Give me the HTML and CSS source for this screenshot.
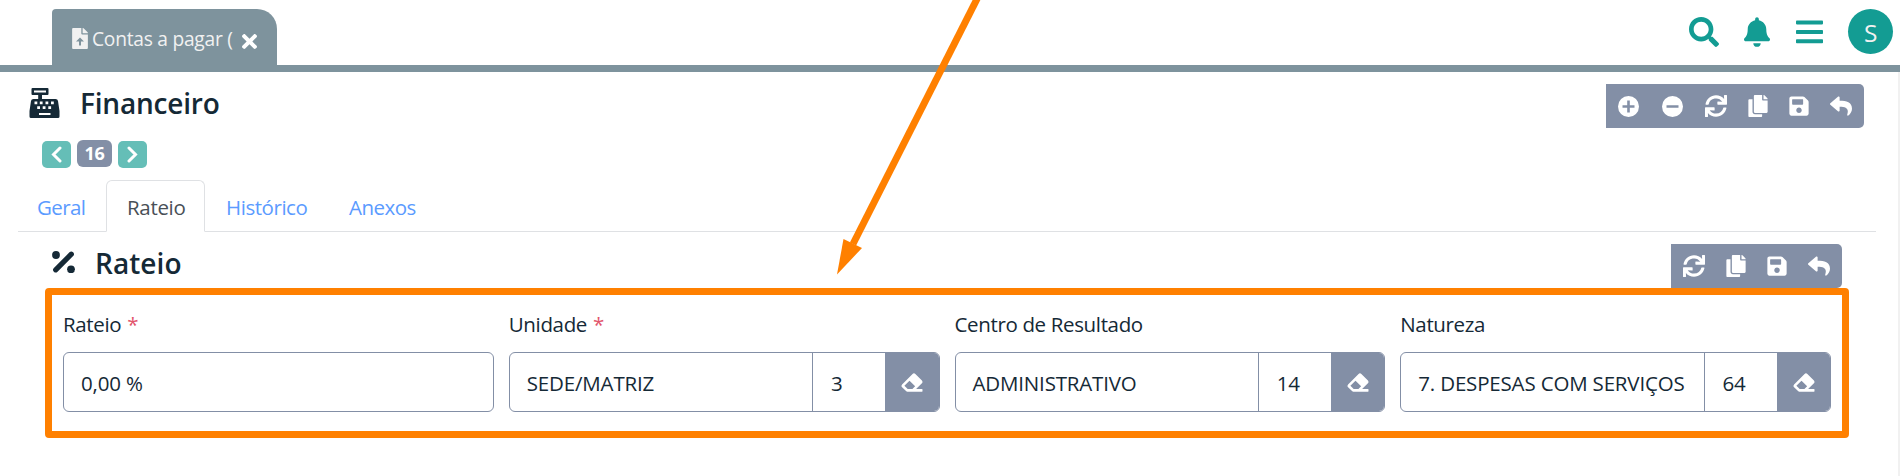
FILE: index.html
```html
<!DOCTYPE html>
<html lang="pt-BR">
<head>
<meta charset="utf-8">
<title>Financeiro</title>
<link rel="stylesheet" href="styles.css">
</head>
<body>
<svg class="sprite" aria-hidden="true">
  <symbol id="sync" viewBox="0 0 512 512"><path d="M440.65 12.57l4 82.77A247.16 247.16 0 0 0 255.83 8C134.73 8 33.91 94.92 12.29 209.82A12 12 0 0 0 24.09 224h49.05a12 12 0 0 0 11.67-9.26 175.91 175.91 0 0 1 317-56.94l-101.46-4.86a12 12 0 0 0-12.57 12v47.41a12 12 0 0 0 12 12H500a12 12 0 0 0 12-12V12a12 12 0 0 0-12-12h-47.37a12 12 0 0 0-11.98 12.57zM255.83 432a175.61 175.61 0 0 1-146-77.8l101.8 4.87a12 12 0 0 0 12.57-12v-47.4a12 12 0 0 0-12-12H12a12 12 0 0 0-12 12V500a12 12 0 0 0 12 12h47.35a12 12 0 0 0 12-12.6l-4.15-82.57A247.17 247.17 0 0 0 255.83 504c121.11 0 221.93-86.92 243.55-201.82a12 12 0 0 0-11.8-14.18h-49.05a12 12 0 0 0-11.67 9.26A175.86 175.86 0 0 1 255.83 432z"/></symbol>
  <symbol id="copy" viewBox="0 0 448 512"><path d="M320 448v40c0 13.255-10.745 24-24 24H24c-13.255 0-24-10.745-24-24V120c0-13.255 10.745-24 24-24h72v296c0 30.879 25.121 56 56 56h168zm0-344V0H152c-13.255 0-24 10.745-24 24v368c0 13.255 10.745 24 24 24h272c13.255 0 24-10.745 24-24V128H344c-13.2 0-24-10.8-24-24zm120.971-31.029L375.029 7.029A24 24 0 0 0 358.059 0H352v96h96v-6.059a24 24 0 0 0-7.029-16.97z"/></symbol>
  <symbol id="save" viewBox="0 0 448 512"><path d="M433.941 129.941l-83.882-83.882A48 48 0 0 0 316.118 32H48C21.49 32 0 53.49 0 80v352c0 26.51 21.49 48 48 48h352c26.51 0 48-21.49 48-48V163.882a48 48 0 0 0-14.059-33.941zM224 416c-35.346 0-64-28.654-64-64 0-35.346 28.654-64 64-64s64 28.654 64 64c0 35.346-28.654 64-64 64zm96-304.52V212c0 6.627-5.373 12-12 12H76c-6.627 0-12-5.373-12-12V108c0-6.627 5.373-12 12-12h228.52c3.183 0 6.235 1.264 8.485 3.515l3.48 3.48A11.996 11.996 0 0 1 320 111.48z"/></symbol>
  <symbol id="reply" viewBox="0 0 512 512"><path d="M8.309 189.836L184.313 37.851C199.719 24.546 224 35.347 224 56.015v80.053c160.629 1.839 288 34.032 288 186.258 0 61.441-39.581 122.309-83.333 154.132-13.653 9.931-33.111-2.533-28.077-18.631 45.344-145.012-21.507-183.51-176.59-185.742V360c0 20.7-24.3 31.453-39.687 18.164l-176.004-152c-11.071-9.562-11.086-26.753 0-36.328z"/></symbol>
  <symbol id="eraser" viewBox="0 0 512 512"><path d="M497.941 273.941c18.745-18.745 18.745-49.137 0-67.882l-160-160c-18.745-18.745-49.136-18.746-67.883 0l-256 256c-18.745 18.745-18.745 49.137 0 67.882l96 96A48.004 48.004 0 0 0 144 480h356c6.627 0 12-5.373 12-12v-40c0-6.627-5.373-12-12-12H355.883l142.058-142.059zm-302.627-62.627l137.373 137.373L265.373 416H150.628l-80-80 124.686-124.686z"/></symbol>
</svg>

<header class="topbar">
  <div class="doc-tab">
    <svg class="doc-icon" viewBox="0 0 384 512"><path fill-rule="evenodd" d="M224 136V0H24A24 24 0 0 0 0 24v464a24 24 0 0 0 24 24h336a24 24 0 0 0 24-24V160H248a24 24 0 0 1-24-24zM377 105L279 7a24 24 0 0 0-17-7h-6v128h128v-6a24 24 0 0 0-7-17zM168 424V328H95L192 232l97 96h-73v96z"/></svg>
    <span class="doc-name">Contas a pagar (</span>
    <svg class="doc-close" viewBox="0 80 352 352"><path d="M242.72 256l100.07-100.07c12.28-12.28 12.28-32.19 0-44.48l-22.24-22.24c-12.28-12.28-32.19-12.28-44.48 0L176 189.28 75.93 89.21c-12.28-12.28-32.19-12.28-44.48 0L9.21 111.45c-12.28 12.28-12.28 32.19 0 44.48L109.28 256 9.21 356.07c-12.28 12.28-12.28 32.19 0 44.48l22.24 22.24c12.28 12.28 32.2 12.28 44.48 0L176 322.72l100.07 100.07c12.28 12.28 32.2 12.28 44.48 0l22.24-22.24c12.28-12.28 12.28-32.19 0-44.48L242.72 256z"/></svg>
  </div>
  <nav class="top-actions">
    <svg class="ic-search" viewBox="0 0 512 512"><path d="M505 442.7L405.3 343c-4.5-4.5-10.6-7-17-7H372c27.6-35.3 44-79.7 44-128C416 93.1 322.9 0 208 0S0 93.1 0 208s93.1 208 208 208c48.3 0 92.7-16.4 128-44v16.3c0 6.4 2.5 12.5 7 17l99.7 99.7c9.4 9.4 24.6 9.4 33.9 0l28.3-28.3c9.4-9.4 9.4-24.6.1-34zM208 336c-70.7 0-128-57.2-128-128 0-70.7 57.2-128 128-128 70.7 0 128 57.2 128 128 0 70.7-57.2 128-128 128z"/></svg>
    <svg class="ic-bell" viewBox="0 0 448 512"><path d="M224 512c35.32 0 63.97-28.65 63.97-64H160.03c0 35.35 28.65 64 63.97 64zm215.39-149.71c-19.32-20.76-55.47-51.99-55.47-154.29 0-77.7-54.48-139.9-127.94-155.16V32c0-17.67-14.32-32-31.98-32s-31.98 14.33-31.98 32v20.84C118.56 68.1 64.08 130.3 64.08 208c0 102.3-36.15 133.53-55.47 154.29-6 6.45-8.66 14.16-8.61 21.71.11 16.4 12.98 32 32.1 32h383.8c19.12 0 32-15.6 32.1-32 .05-7.55-2.61-15.27-8.61-21.71z"/></svg>
    <svg class="ic-bars" viewBox="0 0 27 24"><rect y="0.4" width="27" height="4" rx=".8"/><rect y="10" width="27" height="4" rx=".8"/><rect y="19.3" width="27" height="4" rx=".8"/></svg>
    <span class="avatar">S</span>
  </nav>
</header>

<main class="page">
  <section class="page-head">
    <svg class="ic-register" viewBox="0 0 30 30"><path fill-rule="evenodd" d="M3 0H18Q19 0 19 1V6Q19 7 18 7H12.500V11H26Q28.200 11 28.500 13L30 23V28.500Q30 30 28.500 30H1.500Q0 30 0 28.500V23L1.500 13Q1.800 11 4 11H8.700V7H3Q2 7 2 6V1Q2 0 3 0ZM4.500 2.500V4.500H16.500V2.500ZM5 13.500V16.200H7.800V13.500ZM10.300 13.500V16.200H13.100V13.500ZM16 13.500V16.200H18.800V13.500ZM21.500 13.500V16.200H24.300V13.500ZM7.700 18.300V21H10.500V18.300ZM13.200 18.300V21H16V18.300ZM18.800 18.300V21H21.600V18.300ZM9.500 25V27H21V25Z"/></svg>
    <h1 class="title">Financeiro</h1>
    <div class="toolbar main-tools">
      <svg class="round" viewBox="0 0 21 21"><path fill-rule="evenodd" d="M10.500 0A10.500 10.500 0 1 0 10.500 21A10.500 10.500 0 1 0 10.500 0ZM9.200 4.500H11.800V9.200H16.500V11.800H11.800V16.500H9.200V11.800H4.500V9.200H9.200Z"/></svg>
      <svg class="round" viewBox="0 0 21 21"><path fill-rule="evenodd" d="M10.500 0A10.500 10.500 0 1 0 10.500 21A10.500 10.500 0 1 0 10.500 0ZM4.500 9.200H16.500V11.800H4.500Z"/></svg>
      <svg class="wide"><use href="#sync"/></svg>
      <svg class="narrow"><use href="#copy"/></svg>
      <svg class="narrow"><use href="#save"/></svg>
      <svg class="wide"><use href="#reply"/></svg>
    </div>
  </section>

  <div class="pager">
    <button class="step"><svg viewBox="0 0 11 17"><path d="M9 2L2.500 8.500L9 15"/></svg></button>
    <span class="count">16</span>
    <button class="step"><svg viewBox="0 0 11 17"><path d="M2 2L8.500 8.500L2 15"/></svg></button>
  </div>

  <nav class="tabs">
    <a class="tab geral">Geral</a>
    <a class="tab active">Rateio</a>
    <a class="tab historico">Histórico</a>
    <a class="tab anexos">Anexos</a>
  </nav>

  <section class="sub-head">
    <svg class="ic-percent" viewBox="0 0 23 22"><circle cx="4" cy="4" r="3.900"/><circle cx="19" cy="18.300" r="3.900"/><path d="M19.300 3.200L3.700 18.800"/></svg>
    <h2 class="title">Rateio</h2>
    <div class="toolbar">
      <svg class="wide"><use href="#sync"/></svg>
      <svg class="narrow"><use href="#copy"/></svg>
      <svg class="narrow"><use href="#save"/></svg>
      <svg class="wide"><use href="#reply"/></svg>
    </div>
  </section>

  <section class="fields">
    <div class="field">
      <div class="label"><span>Rateio</span> <span class="req">*</span></div>
      <div class="control"><span class="value">0,00 %</span></div>
    </div>
    <div class="field">
      <div class="label"><span>Unidade</span> <span class="req">*</span></div>
      <div class="control"><span class="value">SEDE/MATRIZ</span><span class="code">3</span><button class="erase"><svg><use href="#eraser"/></svg></button></div>
    </div>
    <div class="field">
      <div class="label"><span>Centro de Resultado</span></div>
      <div class="control"><span class="value">ADMINISTRATIVO</span><span class="code">14</span><button class="erase"><svg><use href="#eraser"/></svg></button></div>
    </div>
    <div class="field">
      <div class="label"><span>Natureza</span></div>
      <div class="control"><span class="value">7. DESPESAS COM SERVIÇOS</span><span class="code">64</span><button class="erase"><svg><use href="#eraser"/></svg></button></div>
    </div>
  </section>
</main>

<svg class="arrow" viewBox="0 0 150 276"><path d="M141.500 -4L16 244" stroke-width="7"/><path class="head" d="M0 274.500L6.500 239L25 248Z"/></svg>
</body>
</html>
```
FILE: styles.css
```css
* { box-sizing: border-box; }

body {
  margin: 0;
  height: 476px;
  overflow: hidden;
  background: #fff;
  color: #152936;
  font-family: "Open Sans", "Noto Sans", sans-serif;
  font-size: 20.500px;
  letter-spacing: -0.320px;
  display: flex;
  flex-direction: column;
}

svg { display: block; flex: none; fill: currentColor; }
.sprite { display: none; }
button { border: 0; padding: 0; display: flex; align-items: center; justify-content: center; color: #fff; }

.topbar {
  height: 72px;
  flex: none;
  border-bottom: 7px solid #7e939d;
  padding: 0 7px 0 52px;
  display: flex;
  justify-content: space-between;
}

.doc-tab {
  width: 225px;
  height: 56px;
  margin-top: 9px;
  padding: 4px 20px 0;
  display: flex;
  align-items: center;
  background: #7e939d;
  color: #f1f1f1;
  border-radius: 4px 20px 0 0;
}
.doc-icon { width: 16px; height: 21px; margin: 0 4px 2px 0; }
.doc-name { width: 150px; font-size: 19.200px; letter-spacing: -0.250px; white-space: nowrap; padding-bottom: 2px; }
.doc-close { width: 15px; height: 15px; margin-top: 5px; color: #fff; }

.top-actions { display: flex; align-items: center; color: #139c93; height: 63px; }
.ic-search { width: 30px; height: 30px; margin-right: 25px; }
.ic-bell { width: 26px; height: 30px; margin-right: 26px; }
.ic-bars { width: 27px; height: 24px; margin-right: 25px; }
.avatar {
  width: 45px;
  height: 45px;
  border-radius: 50%;
  background: #139c93;
  color: #f1f1f1;
  font-size: 24.500px;
  line-height: 47px;
  text-align: center;
}

.page { flex: 1; border-right: 2px solid #f1f1f1; padding-top: 12px; }

.page-head { display: flex; height: 44px; padding: 0 34px 0 29px; }
.title { margin: 0; font-size: 28px; font-weight: 600; line-height: 38px; flex: 1; letter-spacing: -0.200px; }
.ic-register { width: 31px; height: 30px; margin: 4px 20px 0 0; }

.toolbar {
  height: 44px;
  padding: 0 12px;
  display: flex;
  align-items: center;
  gap: 21px;
  background: #838fa6;
  color: #fff;
  border-radius: 0 5px 5px 0;
}
.main-tools { width: 258px; }
.round { width: 21px; height: 21px; margin-right: 1.500px; }
.wide { width: 22px; height: 22px; }
.narrow { width: 20px; height: 22px; }

.pager { display: flex; gap: 6px; padding: 13px 0 0 42px; height: 52px; align-items: flex-start; }
.step { width: 29px; height: 27px; background: #65beb7; border-radius: 5px; }
.step svg { width: 11px; height: 17px; fill: none; stroke: #fff; stroke-width: 3; stroke-linecap: round; }
.pager .count {
  width: 35px;
  height: 27px;
  margin-top: -1px;
  border-radius: 6px;
  background: #838fa6;
  color: #fff;
  font-size: 18px;
  font-weight: 700;
  line-height: 27px;
  text-align: center;
}

.tabs {
  display: flex;
  height: 52px;
  margin: 0 22px 0 18px;
  border-bottom: 1px solid #dfe1e4;
}
.tab { height: 52px; border: 1px solid transparent; padding-left: 20px; line-height: 53px; color: #5b9bff; white-space: nowrap; }
.geral { width: 88px; padding-left: 18px; letter-spacing: -0.600px; }
.active { width: 99px; color: #495057; background: #fff; border-color: #dfe1e4; border-bottom-color: #fff; border-radius: 6px 6px 0 0; }
.historico { width: 123px; letter-spacing: -0.450px; }
.anexos { width: 110px; letter-spacing: -0.500px; }

.sub-head { display: flex; height: 56px; padding: 12px 56px 0 52px; }
.sub-head .title { line-height: 39px; letter-spacing: 0.050px; }
.ic-percent { width: 23px; height: 22px; margin: 7px 20px 0 0; }
.ic-percent path { stroke: currentColor; stroke-width: 5.200; stroke-linecap: round; }

.fields {
  margin: 0 49px 0 45px;
  height: 150px;
  border: 7px solid #ff8000;
  border-radius: 4px;
  padding: 14px 11px 0;
  display: grid;
  grid-template-columns: repeat(4, 1fr);
  gap: 15px;
}
.label { height: 43px; line-height: 31px; white-space: nowrap; letter-spacing: -0.350px; }
.req { color: #e2556c; padding-left: 1px; }
.control { height: 60px; display: flex; border: 1px solid #838fa6; border-radius: 6px; line-height: 60px; overflow: hidden; white-space: nowrap; letter-spacing: -0.170px; }
.value { flex: 1; padding-left: 17px; }
.code { width: 73px; border-left: 1px solid #838fa6; padding-left: 18px; }
.erase { width: 53.500px; padding-left: 1px; background: #838fa6; }
.erase svg { width: 22px; height: 21px; }

/* callout arrow drawn over the page */
.arrow { position: absolute; left: 837px; top: 0; width: 150px; height: 276px; stroke: #ff8000; fill: #ff8000; overflow: visible; pointer-events: none; }
.arrow .head { stroke: none; }
```
